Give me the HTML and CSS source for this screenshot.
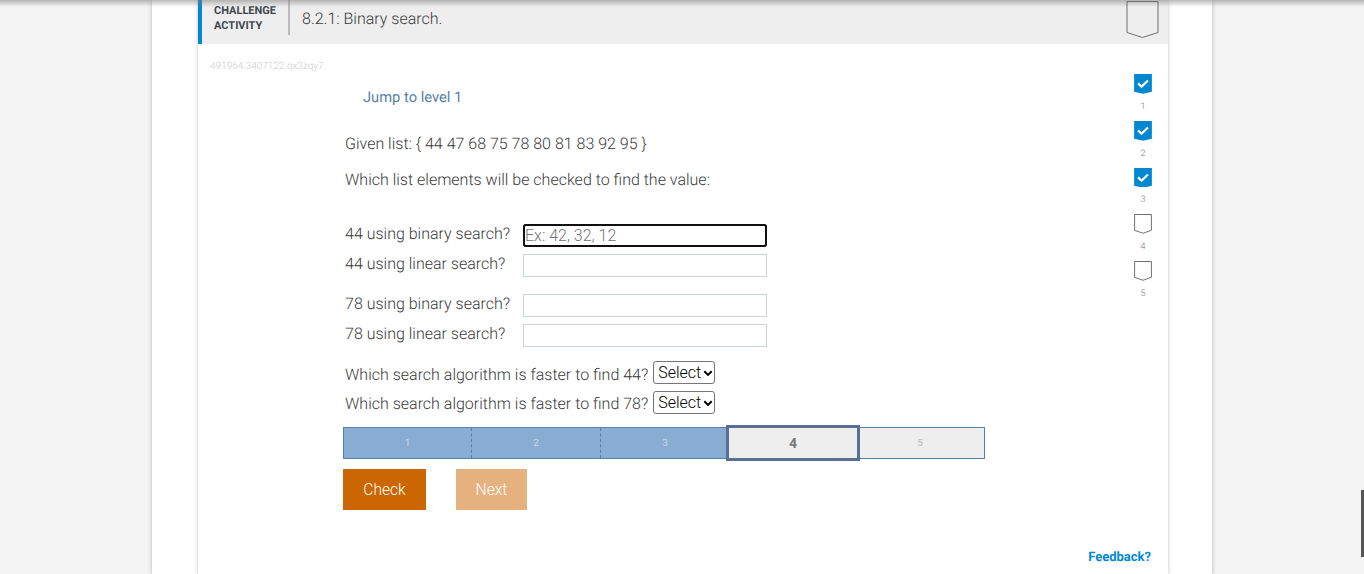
FILE: index.html
```html
<!DOCTYPE html>
<html lang="en">
<head>
<meta charset="utf-8">
<title>8.2.1: Binary search.</title>
<link rel="stylesheet" href="styles.css">
</head>
<body>
<div class="top-shadow"></div>
<div class="column">
  <div class="card">
    <header class="head">
      <div class="kind">CHALLENGE<br>ACTIVITY</div>
      <h1 class="title">8.2.1: Binary search.</h1>
      <svg class="bookmark" width="33" height="39" viewBox="0 0 33 39"><path d="M1 1.5H32V32.5L16.5 37.5L1 32.5Z" fill="none" stroke="#6e6e6e" stroke-width="1"/></svg>
    </header>
    <div class="body">
      <div class="code">491964.3407122.qx3zqy7</div>
      <div class="layout">
        <main class="main">
          <a class="jump">Jump to level 1</a>
          <p class="line given">Given list: { 44 47 68 75 78 80 81 83 92 95 }</p>
          <p class="line which">Which list elements will be checked to find the value:</p>
          <div class="qa first"><label class="qlabel">44 using binary search?</label><input class="answer focused" placeholder="Ex: 42, 32, 12"></div>
          <div class="qa"><label class="qlabel">44 using linear search?</label><input class="answer"></div>
          <div class="qa gap"><label class="qlabel">78 using binary search?</label><input class="answer"></div>
          <div class="qa"><label class="qlabel">78 using linear search?</label><input class="answer"></div>
          <div class="sel first-sel"><span>Which search algorithm is faster to find 44?</span><select class="pick"><option>Select</option></select></div>
          <div class="sel"><span>Which search algorithm is faster to find 78?</span><select class="pick"><option>Select</option></select></div>
          <div class="levels">
            <div class="lv done">1</div>
            <div class="lv done">2</div>
            <div class="lv done">3</div>
            <div class="lv current">4</div>
            <div class="lv todo">5</div>
          </div>
          <div class="buttons">
            <button class="btn check">Check</button>
            <button class="btn next">Next</button>
          </div>
        </main>
        <aside class="steps">
          <div class="step"><svg width="18" height="20" viewBox="0 0 18 20"><path d="M0 0H18V18L9 20L0 18Z" fill="#0288d1"/><path d="M4 9.5L7.5 13L14 6.5" fill="none" stroke="#fff" stroke-width="2.2"/></svg><span>1</span></div>
          <div class="step"><svg width="18" height="20" viewBox="0 0 18 20"><path d="M0 0H18V18L9 20L0 18Z" fill="#0288d1"/><path d="M4 9.5L7.5 13L14 6.5" fill="none" stroke="#fff" stroke-width="2.2"/></svg><span>2</span></div>
          <div class="step"><svg width="18" height="20" viewBox="0 0 18 20"><path d="M0 0H18V18L9 20L0 18Z" fill="#0288d1"/><path d="M4 9.5L7.5 13L14 6.5" fill="none" stroke="#fff" stroke-width="2.2"/></svg><span>3</span></div>
          <div class="step"><svg width="18" height="20" viewBox="0 0 18 20"><path d="M.5 .5H17.5V16.5L9 19.5L.5 16.5Z" fill="none" stroke="#6e6e6e"/></svg><span>4</span></div>
          <div class="step"><svg width="18" height="20" viewBox="0 0 18 20"><path d="M.5 .5H17.5V16.5L9 19.5L.5 16.5Z" fill="none" stroke="#6e6e6e"/></svg><span>5</span></div>
        </aside>
      </div>
      <a class="feedback">Feedback?</a>
    </div>
  </div>
</div>
<div class="thumb"></div>
</body>
</html>
```
FILE: styles.css
```css
* { box-sizing: border-box; }
html, body { margin: 0; height: 574px; overflow: hidden; }
body { background: #f3f3f3; font-family: Roboto, sans-serif; font-weight: 300; color: #3a3a3a; text-rendering: geometricPrecision; }
.top-shadow { position: absolute; left: 0; right: 0; top: 0; height: 7px; z-index: 2; background: linear-gradient(rgba(120,120,120,.5), rgba(200,200,200,0)); }
.thumb { position: absolute; left: 1361px; top: 490px; width: 3px; height: 67px; background: #555; }
.column { width: 1060px; height: 574px; margin: 0 auto; padding: 0 44px 0 46px; background: #fff; box-shadow: 0 0 4px rgba(0,0,0,.25); }
.card { height: 574px; background: #fff; box-shadow: 0 0 4px rgba(0,0,0,.25); }
.head { height: 44px; display: flex; align-items: flex-start; background: #eee; border-left: 4px solid #0288d1; padding-left: 12px; position: relative; }
.kind { font-size: 11px; font-weight: 700; line-height: 15px; color: #3d464d; padding-top: 3px; width: 76px; height: 35px; border-right: 2px solid #bbb; }
.title { margin: 0; font-size: 16px; font-weight: 300; color: #3a3a3a; padding-left: 12px; line-height: 19px; padding-top: 9px; }
.bookmark { position: absolute; right: 9px; top: 0; z-index: 3; }
.body { position: relative; height: 530px; }
.code { position: absolute; left: 12px; top: 17px; font-size: 10px; line-height: 12px; color: #ccc; }
.layout { display: flex; padding-left: 145px; }
.main { width: 642px; padding-top: 44px; }
.jump { display: block; margin-left: 20px; font-size: 14.7px; font-weight: 400; line-height: 18px; color: #5780a6; }
.line { margin: 0 0 0 2px; font-size: 16px; line-height: 19px; }
.given { margin-top: 28px; }
.which { margin-top: 17px; }
.qa { display: flex; align-items: center; height: 23px; margin-left: 2px; margin-top: 7px; }
.qa.first { margin-top: 35px; }
.qa.gap { margin-top: 17px; }
.qlabel { width: 178px; font-size: 16px; line-height: 19px; position: relative; top: -2px; }
.answer { width: 244px; height: 23px; padding: 0 2px; border: 1px solid #c9d7dc; border-radius: 0; font: 300 16px Roboto, sans-serif; background: #fff; }
.answer::placeholder { color: #757575; }
.focused { outline: 2px solid #101010; outline-offset: -2px; border-radius: 3px; border-color: #101010; padding-left: 1px; }
.sel { display: flex; align-items: center; margin-left: 2px; margin-top: 7px; height: 23px; font-size: 16px; }
.sel.first-sel { margin-top: 14px; }
.sel span { margin-right: 5px; position: relative; top: 1px; }
.sel.first-sel span { top: 2px; }
.pick { appearance: none; width: 62px; height: 23px; padding: 0 0 0 4px; font: 300 16px Roboto, sans-serif; color: #000; border: 1px solid #767676; border-radius: 3px; background: #fff url("data:image/svg+xml,%3Csvg xmlns='http://www.w3.org/2000/svg' width='10' height='7'%3E%3Cpath d='M1.3 1.2L5 4.9L8.7 1.2' fill='none' stroke='%23000' stroke-width='2'/%3E%3C/svg%3E") no-repeat 49px 8px; }
.levels { display: flex; height: 32px; margin-top: 13px; border: 1px solid #5780a6; background: #88acd2; }
.lv { display: flex; align-items: center; justify-content: center; font-size: 10px; font-weight: 400; color: #c5d5e8; }
.done { flex: 0 0 129px; }
.done:first-child { flex-basis: 127px; }
.done + .done { border-left: 1px dashed #5780a6; }
.current { flex: 0 0 134px; margin: -3px 0 -3px -3px; background: #eee; border: 3px solid #566f93; color: #777; font-size: 14px; font-weight: 700; padding-top: 2px; position: relative; }
.todo { background: #eee; color: #bbb; flex: 1 1 0; padding-right: 4px; }
.buttons { display: flex; gap: 30px; margin-top: 10px; }
.btn { height: 41px; border: 0; border-radius: 0; font: 300 15.6px Roboto, sans-serif; color: #fff; background: #c60; }
.check { width: 83px; padding: 0; }
.next { width: 71px; padding: 0; background: #e5b27f; }
.steps { position: absolute; right: 16px; top: 30px; width: 18px; display: flex; flex-direction: column; gap: 8px; align-items: center; }
.step { display: flex; flex-direction: column; align-items: center; height: 38.75px; }
.step svg { display: block; }
.step span { font-size: 9px; line-height: 11px; margin-top: 8px; color: #777; }
.feedback { position: absolute; right: 17px; top: 506px; font-size: 13px; font-weight: 700; line-height: 16px; color: #0288d1; }
```
